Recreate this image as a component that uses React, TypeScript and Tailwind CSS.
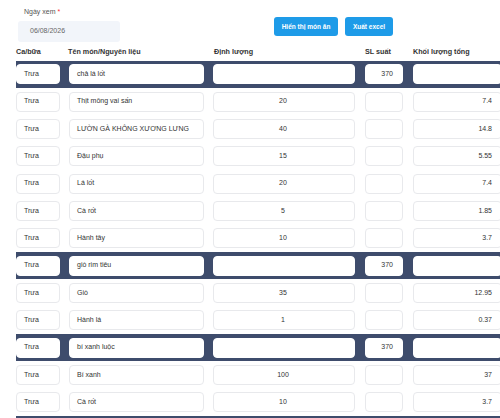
import React from "react";

type Row = {
  dish?: boolean;
  ca: string;
  name: string;
  dl: string;
  sl: string;
  kl: string;
};

const rows: Row[] = [
  { dish: true, ca: "Trưa", name: "chả lá lốt", dl: "", sl: "370", kl: "" },
  { ca: "Trưa", name: "Thịt mông vai sấn", dl: "20", sl: "", kl: "7.4" },
  { ca: "Trưa", name: "LƯỜN GÀ KHÔNG XƯƠNG LƯNG", dl: "40", sl: "", kl: "14.8" },
  { ca: "Trưa", name: "Đậu phụ", dl: "15", sl: "", kl: "5.55" },
  { ca: "Trưa", name: "Lá lốt", dl: "20", sl: "", kl: "7.4" },
  { ca: "Trưa", name: "Cà rốt", dl: "5", sl: "", kl: "1.85" },
  { ca: "Trưa", name: "Hành tây", dl: "10", sl: "", kl: "3.7" },
  { dish: true, ca: "Trưa", name: "giò rim tiêu", dl: "", sl: "370", kl: "" },
  { ca: "Trưa", name: "Giò", dl: "35", sl: "", kl: "12.95" },
  { ca: "Trưa", name: "Hành lá", dl: "1", sl: "", kl: "0.37" },
  { dish: true, ca: "Trưa", name: "bí xanh luộc", dl: "", sl: "370", kl: "" },
  { ca: "Trưa", name: "Bí xanh", dl: "100", sl: "", kl: "37" },
  { ca: "Trưa", name: "Cà rốt", dl: "10", sl: "", kl: "3.7" },
  { dish: true, ca: "", name: "", dl: "", sl: "", kl: "" },
];

const cols = "grid grid-cols-[44px_144px_151px_48px_99px]";

const Cell = ({ value, align, pad, dish }: { value: string; align: string; pad: string; dish?: boolean }) => (
  <div className={pad}>
    <div
      className={`flex h-[20px] items-center overflow-hidden whitespace-nowrap rounded-[4px] bg-white pl-[7px] pr-[9px] ${align} ${
        dish ? "border border-white" : "border border-[#e8e9ec]"
      }`}
    >
      {value}
    </div>
  </div>
);

export default function App() {
  return (
    <div
      className="h-[418px] w-[500px] overflow-hidden bg-white text-[7px] text-[#333]"
      style={{ fontFamily: '"Liberation Sans", Arial, sans-serif' }}
    >
      <div className="flex items-start justify-between pl-[18px] pt-[7px]">
        <div className="flex flex-col">
          <label className="pl-[6px] text-[7px] text-[#555]">
            Ngày xem <span className="text-red-500">*</span>
          </label>
          <div className="mt-[3px] flex h-[21px] w-[102px] items-center rounded-[3px] bg-[#f2f5fa] pl-[12px] text-[7px] text-[#666]">
            06/08/2026
          </div>
        </div>
        <div className="mr-[107px] mt-[10px] flex gap-[7px]">
          <button className="h-[19px] w-[64px] rounded-[3px] bg-[#1e9be8] text-[6.5px] font-semibold text-white">
            Hiển thị món ăn
          </button>
          <button className="h-[19px] w-[48px] rounded-[3px] bg-[#1e9be8] text-[6.5px] font-semibold text-white">
            Xuất excel
          </button>
        </div>
      </div>

      <div className="ml-[16px] mt-[3px]">
        <div className={`${cols} h-[15px] items-center text-[7.2px] font-semibold text-[#333]`}>
          <div>Ca/bữa</div>
          <div className="pl-[8px]">Tên món/Nguyên liệu</div>
          <div className="pl-[10px]">Định lượng</div>
          <div className="pl-[10px]">SL suất</div>
          <div className="whitespace-nowrap pl-[10px]">Khối lượng tổng</div>
        </div>

        <div className="mt-[1px]">
          {rows.map((r, i) => (
            <div
              key={i}
              className={`${cols} h-[27.35px] items-center ${r.dish ? "bg-[#3e4c6c]" : "bg-white"}`}
            >
              <Cell value={r.ca} align="justify-start" pad="" dish={r.dish} />
              <Cell value={r.name} align="justify-start" pad="pl-[9px]" dish={r.dish} />
              <Cell value={r.dl} align="justify-center" pad="pl-[9px]" dish={r.dish} />
              <Cell value={r.sl} align="justify-end" pad="pl-[10px]" dish={r.dish} />
              <Cell value={r.kl} align="justify-end" pad="pl-[10px]" dish={r.dish} />
            </div>
          ))}
        </div>
      </div>
    </div>
  );
}
